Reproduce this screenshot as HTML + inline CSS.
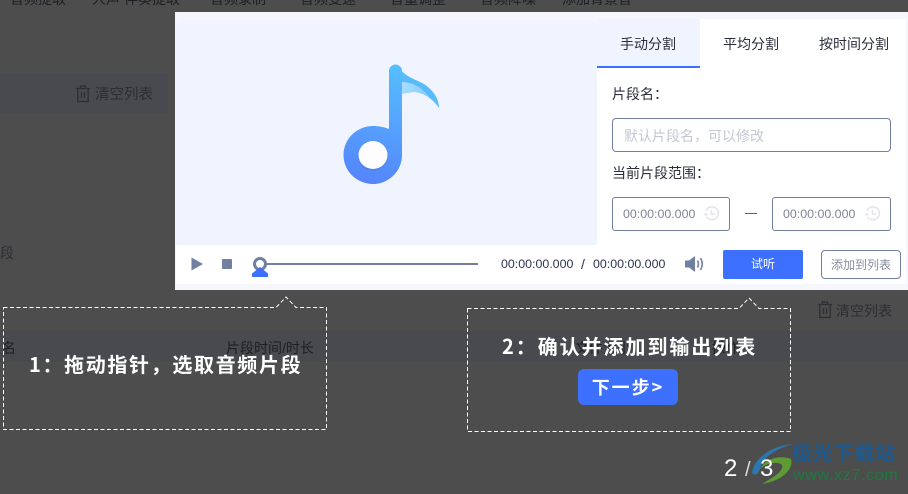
<!DOCTYPE html>
<html><head><meta charset="utf-8">
<style>
html,body{margin:0;padding:0;background:#4d4d4d;}
body{width:908px;height:494px;position:relative;overflow:hidden;font-family:"Liberation Sans","Noto Sans CJK SC",sans-serif;}
.a{position:absolute;white-space:nowrap;}
.d{color:#1d1f24;font-size:14px;line-height:18px;}
.t{color:#2b2f3a;font-size:14px;line-height:18px;}
.b{position:absolute;box-sizing:border-box;border:1px solid #717fa0;border-radius:3px;background:#fff;}
.w{color:#fff;font-family:"WenQuanYi Zen Hei","Noto Sans CJK SC",sans-serif;font-weight:bold;}
</style></head><body>
<!-- dim background -->
<div class="a" style="left:0;top:74px;width:168px;height:40px;background:#484a4f"></div>
<div class="a" style="left:0;top:331px;width:908px;height:31px;background:#484a4f"></div>
<div class="a d" style="left:10px;top:-10px">音频提取</div>
<div class="a d" style="left:92px;top:-10px">人声 伴奏提取</div>
<div class="a d" style="left:210px;top:-10px">音频录制</div>
<div class="a d" style="left:300px;top:-10px">音频变速</div>
<div class="a d" style="left:390px;top:-10px">音量调整</div>
<div class="a d" style="left:480px;top:-10px">音频降噪</div>
<div class="a d" style="left:562px;top:-10px">添加背景音</div>
<svg class="a" style="left:75px;top:85px" width="16" height="18" viewBox="0 0 16 18" fill="none" stroke="#2c2e33" stroke-width="1.3"><path d="M1 3.500H15M5.500 3.500V1H10.500V3.500M2.800 3.500V16.500H13.200V3.500M6.500 7V13M9.500 7V13"/></svg>
<div class="a d" style="left:95px;top:86px;color:#2c2e33;font-size:14.500px">清空列表</div>
<div class="a d" style="left:-14px;top:244px;color:#2c2e33">片段</div>
<svg class="a" style="left:817px;top:301px" width="16" height="18" viewBox="0 0 16 18" fill="none" stroke="#2c2e33" stroke-width="1.3"><path d="M1 3.500H15M5.500 3.500V1H10.500V3.500M2.800 3.500V16.500H13.200V3.500M6.500 7V13M9.500 7V13"/></svg>
<div class="a d" style="left:836px;top:302px;color:#2c2e33">清空列表</div>
<div class="a d" style="left:2px;top:339px">名</div>
<div class="a d" style="left:226px;top:339px">片段时间/时长</div>
<div class="a d" style="left:575px;top:339px">文件大小</div>
<div class="a d" style="left:712px;top:339px">操作</div>

<!-- panel -->
<div class="a" style="left:175px;top:12px;width:733px;height:278px;background:#f6f7fd"></div>
<div class="a" style="left:176px;top:20px;width:421px;height:225px;background:#f0f4ff;border-radius:6px 6px 0 0"></div>
<div class="a" style="left:597px;top:19px;width:309px;height:226px;background:#fff"></div>
<div class="a" style="left:176px;top:245px;width:730px;height:39px;background:#fff"></div>

<!-- note icon -->
<svg class="a" style="left:340px;top:60px" width="104" height="128" viewBox="0 0 104 128">
<defs>
<linearGradient id="g" gradientUnits="userSpaceOnUse" x1="58" y1="4" x2="22" y2="124"><stop offset="0" stop-color="#55bfff"/><stop offset="1" stop-color="#5584fb"/></linearGradient>
<linearGradient id="f" gradientUnits="userSpaceOnUse" x1="62" y1="26" x2="92" y2="36"><stop offset="0" stop-color="#a8dcff"/><stop offset="1" stop-color="#7fcbfb"/></linearGradient>
<radialGradient id="s"><stop offset=".7" stop-color="#3f62c8" stop-opacity=".5"/><stop offset="1" stop-color="#3f62c8" stop-opacity="0"/></radialGradient>
</defs>
<path d="M61 10C68 19 80 20 88 27 96 34 99 41 99 48 93 39 84 33 76 32 70 32 66 33 61 34Z" fill="#58bcfb"/>
<path d="M61 22C72 22 82 27 90 38 84 34 78 32 72 32 68 32 65 33 61 34Z" fill="url(#f)"/>
<path d="M49 11A6.500 6.500 0 0 1 62 11V95C62 111 49 124 33 124A29.500 29 0 0 1 33 66C38 66 44 67 49 69Z" fill="url(#g)"/>
<ellipse cx="33" cy="97" rx="16" ry="15" fill="url(#s)"/>
<ellipse cx="33" cy="95" rx="14.500" ry="14" fill="#fdfdff"/>
</svg>

<!-- tabs -->
<div class="a" style="left:597px;top:19px;width:103px;height:47px;background:#f0f4ff"></div>
<div class="a" style="left:597px;top:66px;width:103px;height:2px;background:#3d70ff"></div>
<div class="a t" style="left:620px;top:35px">手动分割</div>
<div class="a t" style="left:723px;top:35px">平均分割</div>
<div class="a t" style="left:819px;top:35px">按时间分割</div>

<div class="a t" style="left:612px;top:85px">片段名：</div>
<div class="b" style="left:612px;top:118px;width:279px;height:34px;border-radius:4px"></div>
<div class="a" style="left:624px;top:127px;font-size:14px;line-height:18px;color:#c3c7d3">默认片段名，可以修改</div>
<div class="a t" style="left:612px;top:164px">当前片段范围：</div>

<div class="b" style="left:612px;top:197px;width:118px;height:34px"></div>
<div class="a" style="left:623px;top:206px;font-size:12.400px;line-height:16px;color:#7c8496">00:00:00.000</div>
<svg class="a" style="left:703px;top:205px" width="17" height="17" viewBox="0 0 17 17" fill="none" stroke="#e2e2f0" stroke-width="1.5"><path d="M3 5.500A6.500 6.500 0 1 1 3.500 12M8.500 5V9H12"/><path d="M0 8.500H5L3 11Z" fill="#e2e2f0" stroke="none"/></svg>
<div class="a" style="left:745px;top:213px;width:12px;height:1px;background:#5c6478"></div>
<div class="b" style="left:772px;top:197px;width:119px;height:34px"></div>
<div class="a" style="left:783px;top:206px;font-size:12.400px;line-height:16px;color:#7c8496">00:00:00.000</div>
<svg class="a" style="left:864px;top:205px" width="17" height="17" viewBox="0 0 17 17" fill="none" stroke="#e2e2f0" stroke-width="1.5"><path d="M3 5.500A6.500 6.500 0 1 1 3.500 12M8.500 5V9H12"/><path d="M0 8.500H5L3 11Z" fill="#e2e2f0" stroke="none"/></svg>

<!-- player -->
<svg class="a" style="left:191px;top:257px" width="13" height="14" viewBox="0 0 13 14"><path d="M0.500 0.500L12 7L0.500 13.500Z" fill="#717fa0"/></svg>
<div class="a" style="left:222px;top:259px;width:10px;height:10px;background:#717fa0;border-radius:1px"></div>
<div class="a" style="left:266px;top:263px;width:212px;height:2px;background:#717fa0"></div>
<div class="a" style="left:253px;top:257px;width:8px;height:8px;border:3px solid #717fa0;border-radius:50%"></div>
<svg class="a" style="left:252px;top:266px" width="16" height="11" viewBox="0 0 16 11"><path d="M0 11V7.500L5 3.500 8 1 11 3.500 16 7.500V11Z" fill="#3d70ff"/></svg>
<div class="a" style="left:501px;top:256px;font-size:12.400px;line-height:16px;color:#2b3350">00:00:00.000</div>
<div class="a" style="left:581px;top:255px;font-size:14px;line-height:18px;color:#2b3350">/</div>
<div class="a" style="left:593px;top:256px;font-size:12.400px;line-height:16px;color:#2b3350">00:00:00.000</div>
<svg class="a" style="left:685px;top:255px" width="20" height="18" viewBox="0 0 20 18"><path d="M0 5.500H4L10 1V17L4 12.500H0Z" fill="#717fa0"/><path d="M12.500 5.500Q14.500 9 12.500 12.500M15.500 3Q19 9 15.500 15" fill="none" stroke="#717fa0" stroke-width="1.600"/></svg>
<div class="a" style="left:723px;top:250px;width:80px;height:29px;background:#3d70ff;border-radius:2px;color:#fff;font-size:12px;line-height:29px;text-align:center">试听</div>
<div class="b" style="left:821px;top:250px;width:80px;height:29px;border-radius:4px;color:#888e9c;font-size:12px;line-height:28px;text-align:center">添加到列表</div>

<!-- callouts -->
<svg class="a" style="left:0;top:290px" width="908" height="150" viewBox="0 0 908 150" fill="none" stroke="#fff" stroke-width="1" stroke-dasharray="4 2.500">
<path d="M3.500 17.500H276L286 7 296 17.500H326.500V139.500H3.500Z"/>
<path d="M467.500 18.500H739L749 8 759 18.500H790.500V141.500H467.500Z"/>
</svg>
<div class="a w" style="left:29px;top:350px;font-size:20px;line-height:28px;letter-spacing:1.650px">1：拖动指针，选取音频片段</div>
<div class="a w" style="left:502px;top:332px;font-size:20px;line-height:28px;letter-spacing:1.950px">2：确认并添加到输出列表</div>
<div class="a w" style="left:578px;top:369px;width:100px;height:36px;background:#3d70ff;border-radius:6px;font-size:18px;line-height:36px;text-align:center;letter-spacing:2px">下一步&gt;</div>

<!-- page count + watermark -->
<svg class="a" style="left:752px;top:443px" width="44" height="42" viewBox="0 0 44 42"><path d="M0 30C2 14 22 2 41 1 24 6 10 14 8 26 7 30 3 34 0 30Z" fill="#2a78ad"/><path d="M8 26C14 15 28 12 39 16 42 26 30 38 10 41 22 34 32 28 30 22 26 18 14 20 8 26Z" fill="#5f9a35"/></svg>
<div class="a" style="left:724px;top:455px;font-size:24px;line-height:28px;color:#fff;font-weight:300">2</div>
<div class="a" style="left:745px;top:458px;font-size:20px;line-height:24px;color:#ddd">/</div>
<div class="a" style="left:760px;top:455px;font-size:24px;line-height:28px;color:#fff">3</div>
<div class="a" style="left:792px;top:442px;font-size:20px;line-height:24px;font-weight:bold;color:#1c5a8f;letter-spacing:.8px">极光下载站</div>
<div class="a" style="left:793px;top:467px;font-size:16px;line-height:18px;color:#1e7a3f;letter-spacing:.7px">www.xz7.com</div>
</body></html>
